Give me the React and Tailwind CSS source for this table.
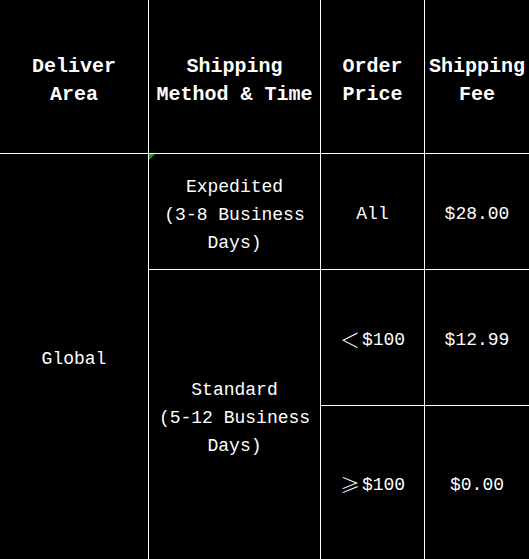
const mono = "font-['Liberation_Mono','Noto_Sans_CJK_SC',monospace]";

const Cell = ({ className = "", children }) => (
  <div
    className={`bg-black text-white flex items-center justify-center text-center ${className}`}
  >
    {children}
  </div>
);

const Head = ({ children }) => (
  <Cell className="text-[20px] font-bold leading-[28px] pt-[8px]">{children}</Cell>
);

export default function App() {
  return (
    <div className={`w-[529px] h-[559px] overflow-hidden bg-black ${mono}`}>
      <div className="grid grid-cols-[148px_171px_103px_104px] grid-rows-[153px_115px_135px_156px] gap-px bg-white">
        {/* header */}
        <Head>
          Deliver
          <br />
          Area
        </Head>
        <Head>
          Shipping
          <br />
          Method &amp; Time
        </Head>
        <Head>
          Order
          <br />
          Price
        </Head>
        <Head>
          Shipping
          <br />
          Fee
        </Head>

        {/* body */}
        <Cell className="row-span-3 text-[18px] leading-[28px] pt-[2px]">Global</Cell>
        <Cell className="relative text-[18px] leading-[28px] pt-[6px]">
          <span className="absolute top-0 left-0 w-0 h-0 border-t-[6px] border-t-[#1a9a2a] border-r-[6px] border-r-transparent" />
          Expedited
          <br />
          (3-8 Business
          <br />
          Days)
        </Cell>
        <Cell className="text-[18px] leading-[28px] pt-[4px]">All</Cell>
        <Cell className="text-[18px] leading-[28px] pt-[4px]">$28.00</Cell>

        <Cell className="row-span-2 text-[18px] leading-[28px] pt-[4px]">
          Standard
          <br />
          (5-12 Business
          <br />
          Days)
        </Cell>
        <Cell className="text-[18px] leading-[28px] pt-[4px]">
          <span className="inline-block w-[22px] text-left font-['Noto_Sans_CJK_SC'] text-[20px] font-light">＜</span>$100
        </Cell>
        <Cell className="text-[18px] leading-[28px] pt-[4px]">$12.99</Cell>

        <Cell className="text-[18px] leading-[28px] pt-[2px]">
          <span className="inline-block w-[22px] text-left font-['Noto_Sans_CJK_SC'] text-[20px] font-light">≥</span>$100
        </Cell>
        <Cell className="text-[18px] leading-[28px] pt-[2px]">$0.00</Cell>
      </div>
    </div>
  );
}
